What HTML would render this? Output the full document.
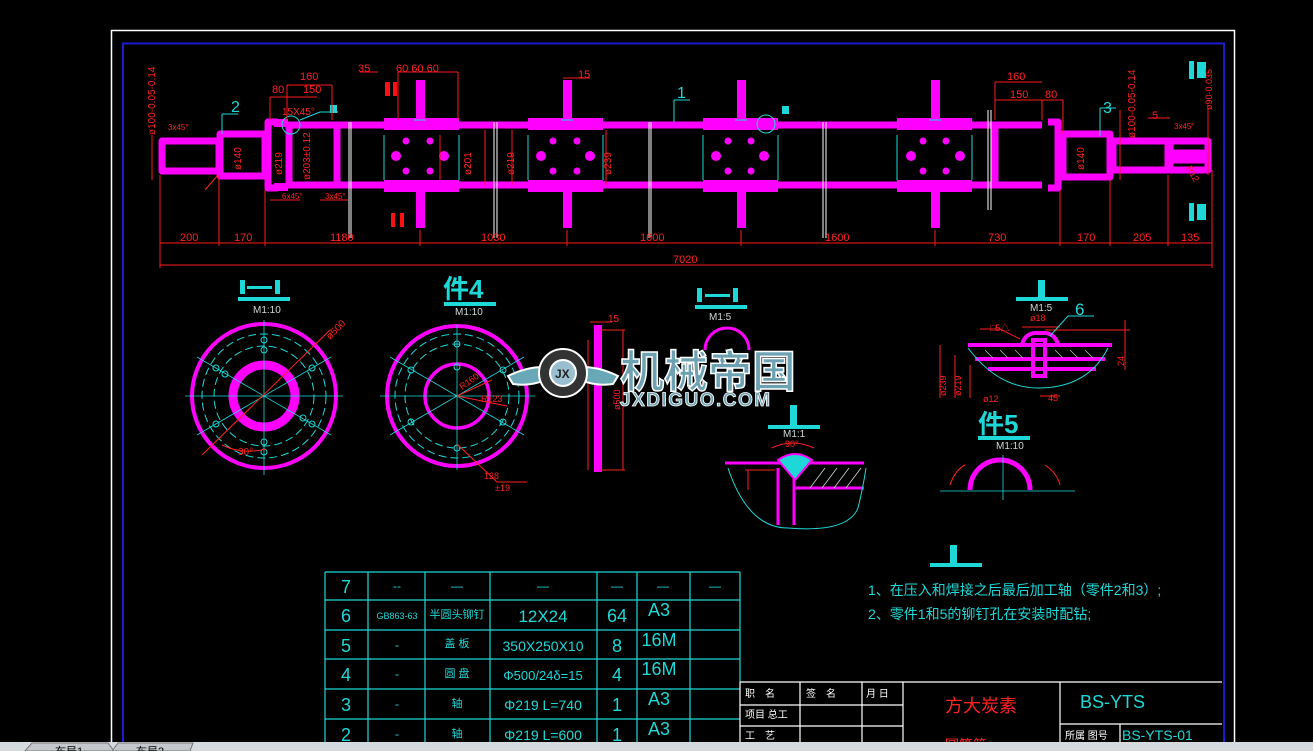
<!DOCTYPE html>
<html><head><meta charset="utf-8"><style>
html,body{margin:0;padding:0;background:#000;width:1313px;height:751px;overflow:hidden}
svg{display:block}
text{font-family:"Liberation Sans","Noto Sans CJK SC",sans-serif}
</style></head><body>
<svg width="1313" height="751" viewBox="0 0 1313 751" xmlns="http://www.w3.org/2000/svg">
<rect width="1313" height="751" fill="#000"/>
<path d="M111.5 742V30.5H1234.5V742" fill="none" stroke="#fff" stroke-width="1.5"/>
<path d="M123 742V43.5H1224V742" fill="none" stroke="#1a1ad0" stroke-width="2"/>

<g fill="none" stroke="#ff00ff" stroke-width="7" stroke-linejoin="round">
<rect x="162" y="141" width="57" height="30"/>
<rect x="220" y="134" width="45" height="42"/>
<path d="M278 122H268V188H278"/>
<path d="M286 125H1042 M286 185H1042"/>
<path d="M289 123V187"/>
<path d="M337 125V185"/>
<path d="M995 125V185"/>
<path d="M1048 122h10v66h-10"/>
<rect x="1063" y="134" width="47" height="43"/>
<rect x="1113" y="141" width="55" height="29"/>
<rect x="1170" y="141" width="38" height="29"/>
<path d="M1172 153H1206 M1172 160H1206"/>
</g>
<g fill="#ff00ff">
<rect x="274" y="119" width="14" height="8"/><rect x="274" y="183" width="14" height="8"/>
<rect x="384" y="118" width="75" height="12"/><rect x="384" y="180" width="75" height="12"/>
<rect x="416" y="80" width="9" height="40"/><rect x="416" y="190" width="9" height="38"/>
<rect x="528" y="118" width="75" height="12"/><rect x="528" y="180" width="75" height="12"/>
<rect x="563" y="80" width="9" height="40"/><rect x="563" y="190" width="9" height="38"/>
<rect x="703" y="118" width="75" height="12"/><rect x="703" y="180" width="75" height="12"/>
<rect x="737" y="80" width="9" height="40"/><rect x="737" y="190" width="9" height="38"/>
<rect x="897" y="118" width="75" height="12"/><rect x="897" y="180" width="75" height="12"/>
<rect x="931" y="80" width="9" height="40"/><rect x="931" y="190" width="9" height="38"/>
</g>
<g fill="#ff00ff">
<circle cx="396" cy="156" r="5"/><circle cx="444" cy="156" r="5"/><circle cx="406" cy="141" r="3.5"/><circle cx="430" cy="141" r="3.5"/><circle cx="406" cy="171" r="3.5"/><circle cx="430" cy="171" r="3.5"/>
<circle cx="541" cy="156" r="5"/><circle cx="590" cy="156" r="5"/><circle cx="553" cy="141" r="3.5"/><circle cx="577" cy="141" r="3.5"/><circle cx="553" cy="171" r="3.5"/><circle cx="577" cy="171" r="3.5"/>
<circle cx="716" cy="156" r="5"/><circle cx="764" cy="156" r="5"/><circle cx="728" cy="141" r="3.5"/><circle cx="751" cy="141" r="3.5"/><circle cx="728" cy="171" r="3.5"/><circle cx="751" cy="171" r="3.5"/>
<circle cx="911" cy="156" r="5"/><circle cx="960" cy="156" r="5"/><circle cx="923" cy="141" r="3.5"/><circle cx="946" cy="141" r="3.5"/><circle cx="923" cy="171" r="3.5"/><circle cx="946" cy="171" r="3.5"/>
</g>
<g stroke="#fff" stroke-width="1">
<path d="M349 122V238 M351 122V238 M494 122V238 M497 122V238 M649 122V238 M651 122V238 M823 122V238 M826 122V238 M988 110V210 M991 110V210"/>
</g>
<g stroke="#1ed8d8" stroke-width="1">
<path d="M384 135V180 M459 135V180 M528 135V180 M603 135V180 M703 135V180 M778 135V180 M897 135V180 M972 135V180"/>
<path d="M414 120h12 M561 120h12 M735 120h12 M929 120h12"/>
<circle cx="291" cy="125" r="9" fill="none"/><circle cx="766" cy="124" r="9" fill="none"/>
<path d="M300 120l20-8h18 M222 114v20 M222 114h16 M1100 108v28 M1100 108h16 M674 100v22 M674 100h16"/>
</g>
<g fill="#1ed8d8"><rect x="330" y="105" width="7" height="8"/><rect x="782" y="106" width="7" height="8"/>
<rect x="1189" y="61" width="5" height="18"/><rect x="1197" y="62" width="9" height="16"/><rect x="1189" y="203" width="5" height="18"/><rect x="1197" y="204" width="9" height="16"/></g>
<g fill="#1ed8d8" font-size="16"><text x="231" y="112">2</text><text x="677" y="98">1</text><text x="1103" y="113">3</text></g>
<g fill="#ff1010"><rect x="385" y="82" width="5" height="14"/><rect x="393" y="82" width="4" height="14"/><rect x="391" y="213" width="4" height="14"/><rect x="400" y="213" width="4" height="14"/></g>

<g stroke="#ff1a1a" stroke-width="1" fill="none">
<path d="M160 243H1212 M160 265H1212 M160 175V268 M219 175V246 M265 190V246 M420 230V246 M567 230V246 M741 230V246 M935 230V246 M1060 190V246 M1110 180V246 M1168 175V246 M1212 170V268"/>
<path d="M287 85H332 M287 85V120 M332 85V120 M270 97H317 M270 97V120 M360 72H378 M398 72H458 M398 72V120 M458 72V120 M563 78H590 M995 82H1042 M995 82V120 M995 100H1063 M1042 100V120 M1063 100V134 M1120 110V180 M1148 118h22 M152 135V180 M1208 108V175"/>
<path d="M205 190l12-14 M270 200h30 M320 200h28 M440 135V180 M485 130V185 M512 130V185 M606 130V185"/>
</g>
<g fill="#ff2020" font-size="11">
<text x="180" y="241">200</text><text x="234" y="241">170</text><text x="330" y="241">1180</text><text x="481" y="241">1030</text><text x="640" y="241">1600</text><text x="825" y="241">1600</text><text x="988" y="241">730</text><text x="1077" y="241">170</text><text x="1133" y="241">205</text><text x="1181" y="241">135</text>
<text x="673" y="263">7020</text>
<text x="300" y="80">160</text><text x="272" y="93">80</text><text x="303" y="93">150</text><text x="358" y="72">35</text><text x="396" y="72">60 60 60</text><text x="578" y="78">15</text>
<text x="1007" y="80">160</text><text x="1010" y="98">150</text><text x="1045" y="98">80</text><text x="1152" y="119">5</text>
<text x="282" y="115" font-size="10">15X45°</text><text x="168" y="130" font-size="8">3x45°</text><text x="282" y="199" font-size="8">6x45°</text><text x="325" y="199" font-size="8">3x45°</text><text x="1174" y="129" font-size="8">3x45°</text>
<text transform="translate(241 170) rotate(-90)" font-size="10">ø140</text>
<text transform="translate(282 175) rotate(-90)" font-size="10">ø219</text>
<text transform="translate(310 180) rotate(-90)" font-size="10">ø203±0.12</text>
<text transform="translate(471 175) rotate(-90)" font-size="10">ø201</text>
<text transform="translate(514 175) rotate(-90)" font-size="10">ø219</text>
<text transform="translate(611 175) rotate(-90)" font-size="10">ø239</text>
<text transform="translate(1084 170) rotate(-90)" font-size="10">ø140</text>
<text transform="translate(155 135) rotate(-90)" font-size="10">ø100-0.05-0.14</text>
<text transform="translate(1135 138) rotate(-90)" font-size="10">ø100-0.05-0.14</text>
<text transform="translate(1212 110) rotate(-90)" font-size="9">ø90-0.035</text>
<text transform="translate(1186 168) rotate(60)" font-size="9">R12</text>
</g>

<g fill="#1ed8d8">
<rect x="240" y="280" width="5" height="14"/><rect x="247" y="286" width="25" height="3"/><rect x="275" y="280" width="5" height="14"/><rect x="238" y="297" width="52" height="4"/>
<rect x="697" y="288" width="5" height="14"/><rect x="705" y="294" width="25" height="3"/><rect x="733" y="288" width="5" height="14"/><rect x="695" y="305" width="52" height="4"/>
<rect x="444" y="302" width="52" height="4"/><rect x="1016" y="297" width="52" height="4"/><rect x="1038" y="280" width="7" height="18"/>
<rect x="768" y="425" width="52" height="4"/><rect x="790" y="405" width="7" height="21"/>
<rect x="930" y="563" width="52" height="4"/><rect x="950" y="545" width="7" height="18"/>
<rect x="978" y="436" width="52" height="4"/>
</g>
<g fill="#1ed8d8" font-weight="bold" font-size="26"><text x="443" y="298">件4</text><text x="978" y="433">件5</text></g>
<g fill="#cfd8d8" font-size="10"><text x="253" y="313">M1:10</text><text x="455" y="315">M1:10</text><text x="709" y="320">M1:5</text><text x="1030" y="311">M1:5</text><text x="783" y="437">M1:1</text><text x="996" y="449">M1:10</text></g>

<g fill="none">
<circle cx="264" cy="396" r="72" stroke="#ff00ff" stroke-width="4"/>
<circle cx="264" cy="396" r="31" stroke="#ff00ff" stroke-width="9"/>
<g stroke="#1ed8d8" stroke-width="1" stroke-dasharray="8 4">
<circle cx="264" cy="396" r="62"/><circle cx="264" cy="396" r="50"/>
</g>
<g stroke="#1ed8d8" stroke-width="0.8">
<path d="M264 320V475 M185 396H343 M197 357L331 435 M197 435L331 357"/>
</g>
<g stroke="#1ed8d8"><circle cx="264" cy="340" r="3"/><circle cx="264" cy="452" r="3"/><circle cx="216" cy="368" r="3"/><circle cx="312" cy="368" r="3"/><circle cx="216" cy="424" r="3"/><circle cx="312" cy="424" r="3"/><circle cx="264" cy="350" r="3"/><circle cx="264" cy="442" r="3"/><circle cx="225" cy="374" r="3"/><circle cx="303" cy="418" r="3"/></g>
<path d="M202 455L330 330" stroke="#ff2020"/>
<path d="M222 445q20 10 44 4" stroke="#ff2020"/>
</g>
<text x="238" y="455" fill="#ff2020" font-size="10">30°</text>
<text transform="translate(330 340) rotate(-45)" fill="#ff2020" font-size="10">ø500</text>

<g fill="none">
<circle cx="457" cy="396" r="70" stroke="#ff00ff" stroke-width="4"/>
<circle cx="457" cy="396" r="32" stroke="#ff00ff" stroke-width="3.5"/>
<g stroke="#1ed8d8" stroke-width="1" stroke-dasharray="8 4"><circle cx="457" cy="396" r="62"/><circle cx="457" cy="396" r="52"/></g>
<g stroke="#1ed8d8" stroke-width="0.8"><path d="M457 325V470 M380 396H535 M390 357L524 435 M390 435L524 357"/></g>
<g stroke="#1ed8d8"><circle cx="457" cy="344" r="3"/><circle cx="457" cy="448" r="3"/><circle cx="411" cy="370" r="3"/><circle cx="503" cy="370" r="3"/><circle cx="411" cy="422" r="3"/><circle cx="503" cy="422" r="3"/><circle cx="457" cy="367" r="3"/></g>
<path d="M457 396L492 380 M457 396l50 10 M457 444l40 38h30" stroke="#ff2020"/>
</g>
<g fill="#ff2020" font-size="9"><text x="484" y="479">128</text><text x="495" y="491">±19</text><text transform="translate(462 390) rotate(-35)">R160</text><text x="481" y="402">R123</text></g>

<rect x="594" y="325" width="8" height="147" fill="#ff00ff"/>
<g stroke="#ff2020" fill="none"><path d="M600 330H625 M623 330V470 M600 470H625 M588 340V470 M590 322H612"/></g>
<text x="608" y="322" fill="#ff2020" font-size="10">15</text>
<text transform="translate(620 410) rotate(-90)" fill="#ff2020" font-size="9">ø500</text>

<path d="M705 350a22 22 0 0 1 44 0" fill="none" stroke="#ff00ff" stroke-width="3"/>

<g fill="none">
<path d="M725 463H864" stroke="#ff00ff" stroke-width="3"/>
<path d="M778 468V525 M794 468V525 M796 488H864" stroke="#ff00ff" stroke-width="3"/>
<path d="M778 460q17 -12 34 0l-17 20z" fill="#1ed8d8" stroke="#ff00ff" stroke-width="2"/>
<path d="M728 468q20 60 60 60q60 5 70 -20q5 -20 8 -40" stroke="#1ed8d8"/>
<g stroke="#cfd8d8" stroke-width="0.8"><path d="M810 488l15 -20 M822 488l15 -20 M834 488l15 -20 M846 488l15 -20"/></g>
<path d="M772 448q20 -10 42 0" stroke="#ff2020"/>
<path d="M745 470H775 M748 470V490" stroke="#ff2020"/>
</g>
<text x="785" y="447" fill="#ff2020" font-size="9">90°</text>

<g fill="none">
<path d="M968 345H1112" stroke="#ff00ff" stroke-width="4"/>
<path d="M975 359H1105 M988 369H1096" stroke="#ff00ff" stroke-width="4"/>
<rect x="1033" y="340" width="12" height="36" stroke="#ff00ff" stroke-width="4"/>
<path d="M1022 345q2 -10 12 -12h12q10 2 12 12" stroke="#ff00ff" stroke-width="4"/>
<path d="M968 348q30 40 70 40q50 0 70 -40" stroke="#1ed8d8"/>
<g stroke="#cfd8d8" stroke-width="0.6"><path d="M985 350l8 8 M1000 350l8 8 M1015 350l8 8 M1055 350l8 8 M1070 350l8 8 M1085 350l8 8"/></g>
<path d="M940 345V398 M955 355V398 M970 365V398 M1022 327H1060 M1045 330H1130 M1125 320V370 M1040 396H1060 M980 329h20l20 10" stroke="#ff2020"/>
<path d="M1050 336l18 -20h26" stroke="#1ed8d8"/>
</g>
<text x="1075" y="315" fill="#1ed8d8" font-size="17">6</text>
<g fill="#ff2020" font-size="9"><text x="1030" y="321">ø18</text><text x="990" y="331">□5△</text><text x="983" y="402">ø12</text><text transform="translate(1124 366) rotate(-90)">24</text><text x="1048" y="401">45</text><text transform="translate(946 396) rotate(-90)">ø239</text><text transform="translate(961 396) rotate(-90)">ø219</text></g>

<path d="M970 490a30 30 0 0 1 60 0" fill="none" stroke="#ff00ff" stroke-width="5"/>
<path d="M940 491H1075 M1003 455V500" stroke="#1ed8d8" stroke-width="0.8"/>
<path d="M950 485q5 -15 15 -20 M1045 465q12 8 15 20" stroke="#ff2020" fill="none"/>

<g>
<path d="M508 376q28 -14 52 -6q-20 18 -47 14z" fill="#6aa8b8" stroke="#fff" stroke-width="2"/>
<path d="M618 376q-28 -14 -52 -6q20 18 47 14z" fill="#6aa8b8" stroke="#fff" stroke-width="2"/>
<circle cx="563" cy="373" r="24" fill="#333" stroke="#fff" stroke-width="2"/>
<circle cx="563" cy="373" r="13" fill="#9ac0d0" stroke="#fff" stroke-width="2"/>
<text x="555" y="378" font-size="12" fill="#222" font-weight="bold">JX</text>
<text x="620" y="387" font-size="44" font-weight="bold" fill="#6ea2b2" stroke="#fff" stroke-width="1.5">机械帝国</text>
<text x="620" y="406" font-size="19" font-weight="bold" fill="#6ea2b2" stroke="#fff" stroke-width="0.8" letter-spacing="1.5">JXDIGUO.COM</text>
</g>

<g fill="#1ed8d8" font-size="14">
<text x="868" y="595">1、在压入和焊接之后最后加工轴（零件2和3）;</text>
<text x="868" y="619">2、零件1和5的铆钉孔在安装时配钻;</text>
</g>

<g stroke="#1ed8d8" stroke-width="1.2" fill="none">
<path d="M325 572H740 M325 600H740 M325 630H740 M325 659H740 M325 689H740 M325 719H740"/>
<path d="M325 572V742 M368 572V742 M425 572V742 M490 572V742 M597 572V742 M637 572V742 M690 572V742 M740 572V682"/>
</g>
<g fill="#1ed8d8" font-size="18" text-anchor="middle">
<text x="346" y="593">7</text><text x="346" y="622">6</text><text x="346" y="652">5</text><text x="346" y="681">4</text><text x="346" y="711">3</text><text x="346" y="741">2</text>
<text x="397" y="590" font-size="12">--</text><text x="457" y="590" font-size="12">—</text><text x="543" y="590" font-size="12">—</text><text x="617" y="590" font-size="12">—</text><text x="663" y="590" font-size="12">—</text><text x="715" y="590" font-size="12">—</text>
<text x="397" y="619" font-size="9">GB863-63</text><text x="457" y="618" font-size="11">半圆头铆钉</text><text x="543" y="622" font-size="17">12X24</text><text x="617" y="622">64</text><text x="659" y="616">A3</text>
<text x="397" y="649" font-size="12">-</text><text x="457" y="647" font-size="11">盖 板</text><text x="543" y="651" font-size="14">350X250X10</text><text x="617" y="652">8</text><text x="659" y="646">16M</text>
<text x="397" y="678" font-size="12">-</text><text x="457" y="677" font-size="11">圆 盘</text><text x="543" y="680" font-size="13">Φ500/24δ=15</text><text x="617" y="681">4</text><text x="659" y="675">16M</text>
<text x="397" y="708" font-size="12">-</text><text x="457" y="707" font-size="11">轴</text><text x="543" y="710" font-size="14">Φ219  L=740</text><text x="617" y="711">1</text><text x="659" y="705">A3</text>
<text x="397" y="738" font-size="12">-</text><text x="457" y="737" font-size="11">轴</text><text x="543" y="740" font-size="14">Φ219  L=600</text><text x="617" y="741">1</text><text x="659" y="735">A3</text>
</g>

<g stroke="#fff" stroke-width="1.2" fill="none">
<path d="M740 682H1222 M740 705H903 M740 726H862 M862 726H903 M1060 724H1222"/>
<path d="M740 682V742 M800 682V742 M862 682V742 M903 682V742 M1060 682V742 M1120 724V742"/>
</g>
<g fill="#fff" font-size="10"><text x="745" y="697">职　名</text><text x="806" y="697">签　名</text><text x="866" y="697">月 日</text><text x="745" y="718">项目 总工</text><text x="745" y="739">工　艺</text><text x="1065" y="739">所属 图号</text></g>
<text x="945" y="712" fill="#ff2020" font-size="18">方大炭素</text>
<text x="945" y="750" fill="#ff2020" font-size="14">圆筒筛</text>
<text x="1080" y="708" fill="#1ed8d8" font-size="18">BS-YTS</text>
<text x="1122" y="740" fill="#1ed8d8" font-size="14">BS-YTS-01</text>

<rect x="0" y="742" width="1313" height="9" fill="#d5dadf"/>
<path d="M25 751L32 743H108L114 751Z" fill="#c4c8cc" stroke="#777"/>
<path d="M112 751L118 743H193L190 751Z" fill="#c4c8cc" stroke="#777"/>
<text x="55" y="755" font-size="11" fill="#000">布局1</text><text x="136" y="755" font-size="11" fill="#000">布局2</text>
</svg>
</body></html>
